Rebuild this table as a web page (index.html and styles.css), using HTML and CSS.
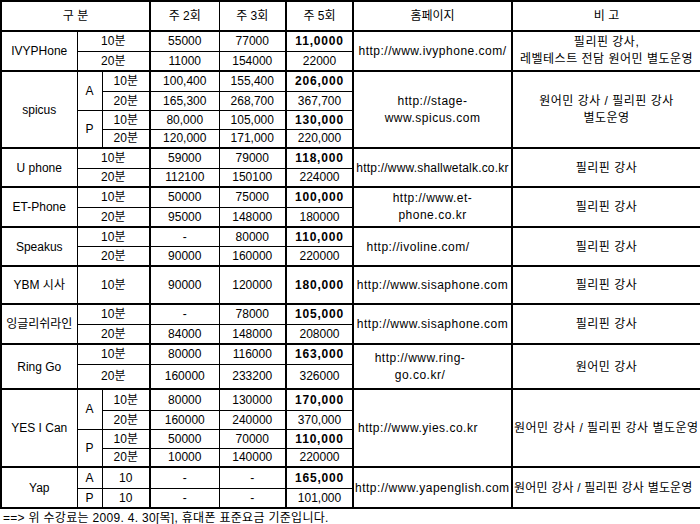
FILE: index.html
```html
<!DOCTYPE html>
<html lang="ko">
<head>
<meta charset="utf-8">
<title>전화영어 수강료 비교</title>
<link rel="stylesheet" href="styles.css">
</head>
<body>
<table class="price">
  <colgroup>
    <col class="c-name">
    <col class="c-ap">
    <col class="c-min thick">
    <col class="c-w2">
    <col class="c-w3 thick">
    <col class="c-w5 thick">
    <col class="c-url thick">
    <col class="c-note thick">
  </colgroup>
  <thead>
    <tr class="h30">
      <th colspan="3">구 분</th>
      <th>주 2회</th>
      <th>주 3회</th>
      <th>주 5회</th>
      <th>홈페이지</th>
      <th>비 고</th>
    </tr>
  </thead>
  <tbody>
    <tr class="h20">
      <td rowspan="2">IVYPHone</td>
      <td colspan="2">10분</td>
      <td>55000</td><td>77000</td><td class="b">11,0000</td>
      <td rowspan="2" class="u">http://www.ivyphone.com/</td>
      <td rowspan="2" class="k ml">필리핀 강사,<br>레벨테스트 전담 원어민 별도운영</td>
    </tr>
    <tr class="h20">
      <td colspan="2">20분</td>
      <td>11000</td><td>154000</td><td>22000</td>
    </tr>
  </tbody>
  <tbody>
    <tr class="h20">
      <td rowspan="4">spicus</td>
      <td rowspan="2">A</td>
      <td>10분</td>
      <td>100,400</td><td>155,400</td><td class="b">206,000</td>
      <td rowspan="4" class="u ml">http://stage-<br>www.spicus.com</td>
      <td rowspan="4" class="k ml">원어민 강사 / 필리핀 강사<br>별도운영</td>
    </tr>
    <tr class="h19">
      <td>20분</td>
      <td>165,300</td><td>268,700</td><td>367,700</td>
    </tr>
    <tr class="h19">
      <td rowspan="2">P</td>
      <td>10분</td>
      <td>80,000</td><td>105,000</td><td class="b">130,000</td>
    </tr>
    <tr class="h19">
      <td>20분</td>
      <td>120,000</td><td>171,000</td><td>220,000</td>
    </tr>
  </tbody>
  <tbody>
    <tr class="h20">
      <td rowspan="2">U phone</td>
      <td colspan="2">10분</td>
      <td>59000</td><td>79000</td><td class="b">118,000</td>
      <td rowspan="2" class="u tight">http://www.shallwetalk.co.kr</td>
      <td rowspan="2" class="k">필리핀 강사</td>
    </tr>
    <tr class="h19">
      <td colspan="2">20분</td>
      <td>112100</td><td>150100</td><td>224000</td>
    </tr>
  </tbody>
  <tbody>
    <tr class="h20">
      <td rowspan="2">ET-Phone</td>
      <td colspan="2">10분</td>
      <td>50000</td><td>75000</td><td class="b">100,000</td>
      <td rowspan="2" class="u ml">http://www.et-<br>phone.co.kr</td>
      <td rowspan="2" class="k">필리핀 강사</td>
    </tr>
    <tr class="h20">
      <td colspan="2">20분</td>
      <td>95000</td><td>148000</td><td>180000</td>
    </tr>
  </tbody>
  <tbody>
    <tr class="h19">
      <td rowspan="2">Speakus</td>
      <td colspan="2">10분</td>
      <td>-</td><td>80000</td><td class="b">110,000</td>
      <td rowspan="2" class="u shift">http://ivoline.com/</td>
      <td rowspan="2" class="k">필리핀 강사</td>
    </tr>
    <tr class="h20">
      <td colspan="2">20분</td>
      <td>90000</td><td>160000</td><td>220000</td>
    </tr>
  </tbody>
  <tbody>
    <tr class="h38">
      <td>YBM 시사</td>
      <td colspan="2">10분</td>
      <td>90000</td><td>120000</td><td class="b">180,000</td>
      <td class="u">http://www.sisaphone.com</td>
      <td class="k">필리핀 강사</td>
    </tr>
  </tbody>
  <tbody>
    <tr class="h20">
      <td rowspan="2">잉글리쉬라인</td>
      <td colspan="2">10분</td>
      <td>-</td><td>78000</td><td class="b">105,000</td>
      <td rowspan="2" class="u">http://www.sisaphone.com</td>
      <td rowspan="2" class="k">필리핀 강사</td>
    </tr>
    <tr class="h20">
      <td colspan="2">20분</td>
      <td>84000</td><td>148000</td><td>208000</td>
    </tr>
  </tbody>
  <tbody>
    <tr class="h20">
      <td rowspan="2">Ring Go</td>
      <td colspan="2">10분</td>
      <td>80000</td><td>116000</td><td class="b">163,000</td>
      <td rowspan="2" class="u ml shift-s">http://www.ring-<br>go.co.kr/</td>
      <td rowspan="2" class="k">원어민 강사</td>
    </tr>
    <tr class="h25">
      <td colspan="2">20분</td>
      <td>160000</td><td>233200</td><td>326000</td>
    </tr>
  </tbody>
  <tbody>
    <tr class="h21">
      <td rowspan="4">YES I Can</td>
      <td rowspan="2">A</td>
      <td>10분</td>
      <td>80000</td><td>130000</td><td class="b">170,000</td>
      <td rowspan="4" class="u left pad4">http://www.yies.co.kr</td>
      <td rowspan="4" class="k left">원어민 강사 / 필리핀 강사 별도운영</td>
    </tr>
    <tr class="h19">
      <td>20분</td>
      <td>160000</td><td>240000</td><td>370,000</td>
    </tr>
    <tr class="h19">
      <td rowspan="2">P</td>
      <td>10분</td>
      <td>50000</td><td>70000</td><td class="b">110,000</td>
    </tr>
    <tr class="h19">
      <td>20분</td>
      <td>10000</td><td>140000</td><td>220000</td>
    </tr>
  </tbody>
  <tbody>
    <tr class="h21">
      <td rowspan="2">Yap</td>
      <td>A</td>
      <td>10</td>
      <td>-</td><td>-</td><td class="b">165,000</td>
      <td rowspan="2" class="u left">http://www.yapenglish.com</td>
      <td rowspan="2" class="k left tight">원어민 강사 / 필리핀 강사 별도운영</td>
    </tr>
    <tr class="h20">
      <td>P</td>
      <td>10</td>
      <td>-</td><td>-</td><td>101,000</td>
    </tr>
  </tbody>
</table>
<p class="note">==&gt; 위 수강료는 2009. 4. 30[목], 휴대폰 표준요금 기준입니다.</p>
</body>
</html>
```

FILE: styles.css
```css
html, body {
  margin: 0;
  padding: 0;
  background: #fff;
}

body {
  font-family: "Liberation Sans", "Noto Sans CJK KR", sans-serif;
  font-size: 12px;
  color: #000;
}

.price {
  border-collapse: collapse;
  table-layout: fixed;
  width: 700px;
  border: 2px solid #000;
}

.c-name { width: 76px; }
.c-ap { width: 25px; }
.c-min { width: 48px; }
.c-w2 { width: 69px; }
.c-w3 { width: 67px; }
.c-w5 { width: 67px; }
.c-url { width: 159px; }
.c-note { width: 189px; }

col.thick {
  border-right: 2px solid #000;
}

.price thead tr {
  border-bottom: 2px solid #000;
}

.price tbody {
  border-top: 2px solid #000;
}

.price th,
.price td {
  border: 1px solid #000;
  padding: 0 1px;
  text-align: center;
  vertical-align: middle;
  white-space: nowrap;
  overflow: hidden;
  font-weight: normal;
  line-height: 14px;
}

.price td.b {
  font-weight: bold;
  letter-spacing: 0.8px;
}

.price td.u {
  letter-spacing: 0.5px;
}

.price td.k {
  letter-spacing: 0.5px;
}

.price td.tight {
  letter-spacing: 0.2px;
}

.price td.ml {
  line-height: 17px;
}

.price td.left {
  text-align: left;
}

.price td.pad4 {
  padding-left: 4px;
}

.price td.shift {
  padding-right: 30px;
}

.price td.shift-s {
  padding-right: 26px;
}

.h19 { height: 19px; }
.h20 { height: 20px; }
.h21 { height: 21px; }
.h25 { height: 25px; }
.h30 { height: 30px; }
.h38 { height: 38px; }

.note {
  margin: 2px 0 0 3px;
  line-height: 14px;
  letter-spacing: 0.3px;
}
```
